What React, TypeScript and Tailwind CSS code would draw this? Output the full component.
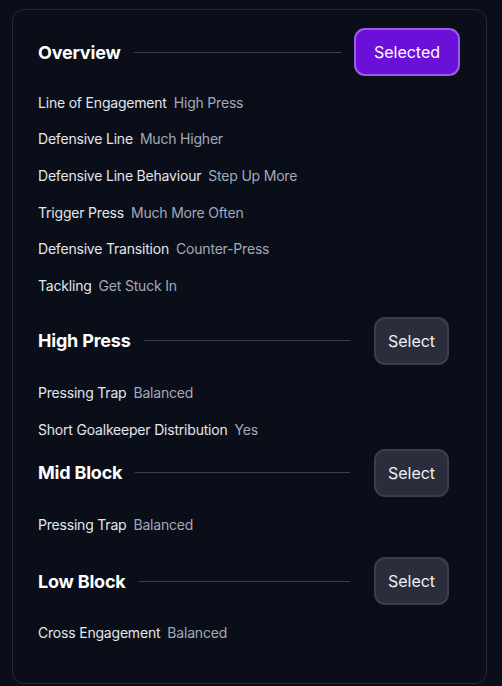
import type React from "react"

type Row = { label: string; value: string }

type Section = {
  title: string
  selected?: boolean
  rows: Row[]
  top: string
  gap: string
}

const sections: Section[] = [
  {
    title: "Overview",
    selected: true,
    top: "mt-[18px]",
    gap: "mt-[8px]",
    rows: [
      { label: "Line of Engagement", value: "High Press" },
      { label: "Defensive Line", value: "Much Higher" },
      { label: "Defensive Line Behaviour", value: "Step Up More" },
      { label: "Trigger Press", value: "Much More Often" },
      { label: "Defensive Transition", value: "Counter-Press" },
      { label: "Tackling", value: "Get Stuck In" },
    ],
  },
  {
    title: "High Press",
    top: "mt-[13px]",
    gap: "mt-[10px]",
    rows: [
      { label: "Pressing Trap", value: "Balanced" },
      { label: "Short Goalkeeper Distribution", value: "Yes" },
    ],
  },
  {
    title: "Mid Block",
    top: "mt-[1px]",
    gap: "mt-[9px]",
    rows: [{ label: "Pressing Trap", value: "Balanced" }],
  },
  {
    title: "Low Block",
    top: "mt-[15px]",
    gap: "mt-[9px]",
    rows: [{ label: "Cross Engagement", value: "Balanced" }],
  },
]

const SectionBlock: React.FC<{ section: Section }> = ({ section }) => (
  <div className={section.top}>
    <div className="flex items-center h-12">
      <h2 className="text-[18px] font-bold text-white tracking-[-0.2px]">{section.title}</h2>
      {section.selected ? (
        <>
          <div className="flex-1 h-px bg-[#3a3f4e] ml-[13px] mr-[13px]" />
          <button className="h-12 w-[106px] rounded-[11px] bg-[#6a10d9] border-2 border-[#9b5ce8] text-white text-[16px]">
            Selected
          </button>
          <div className="w-[26px]" />
        </>
      ) : (
        <>
          <div className="flex-1 h-px bg-[#3a3f4e] ml-[13px] mr-[24px]" />
          <button className="h-12 w-[75px] rounded-[11px] bg-[#2a2d3c] border-2 border-[#3a3e4f] text-[#eef0f4] text-[16px]">
            Select
          </button>
          <div className="w-[37px]" />
        </>
      )}
    </div>
    <div className={`${section.gap} flex flex-col`}>
      {section.rows.map((r) => (
        <div
          key={r.label + section.title}
          className="h-[36.6px] flex items-center text-[14px] tracking-[-0.2px]"
        >
          <span className="text-[#e3e6ec]">{r.label}</span>
          <span className="ml-[7px] text-[#a3a9ba]">{r.value}</span>
        </div>
      ))}
    </div>
  </div>
)

export default function App() {
  return (
    <div
      className="w-[502px] h-[686px] bg-[#0a0e18] pt-[9px] pl-[12px]"
      style={{ fontFamily: "Inter, 'Noto Sans', sans-serif" }}
    >
      <div className="w-[475px] h-[675px] rounded-[12px] border border-[#262a36] bg-[#0a0e18] pl-[25px]">
        {sections.map((s) => (
          <SectionBlock key={s.title} section={s} />
        ))}
      </div>
    </div>
  )
}
